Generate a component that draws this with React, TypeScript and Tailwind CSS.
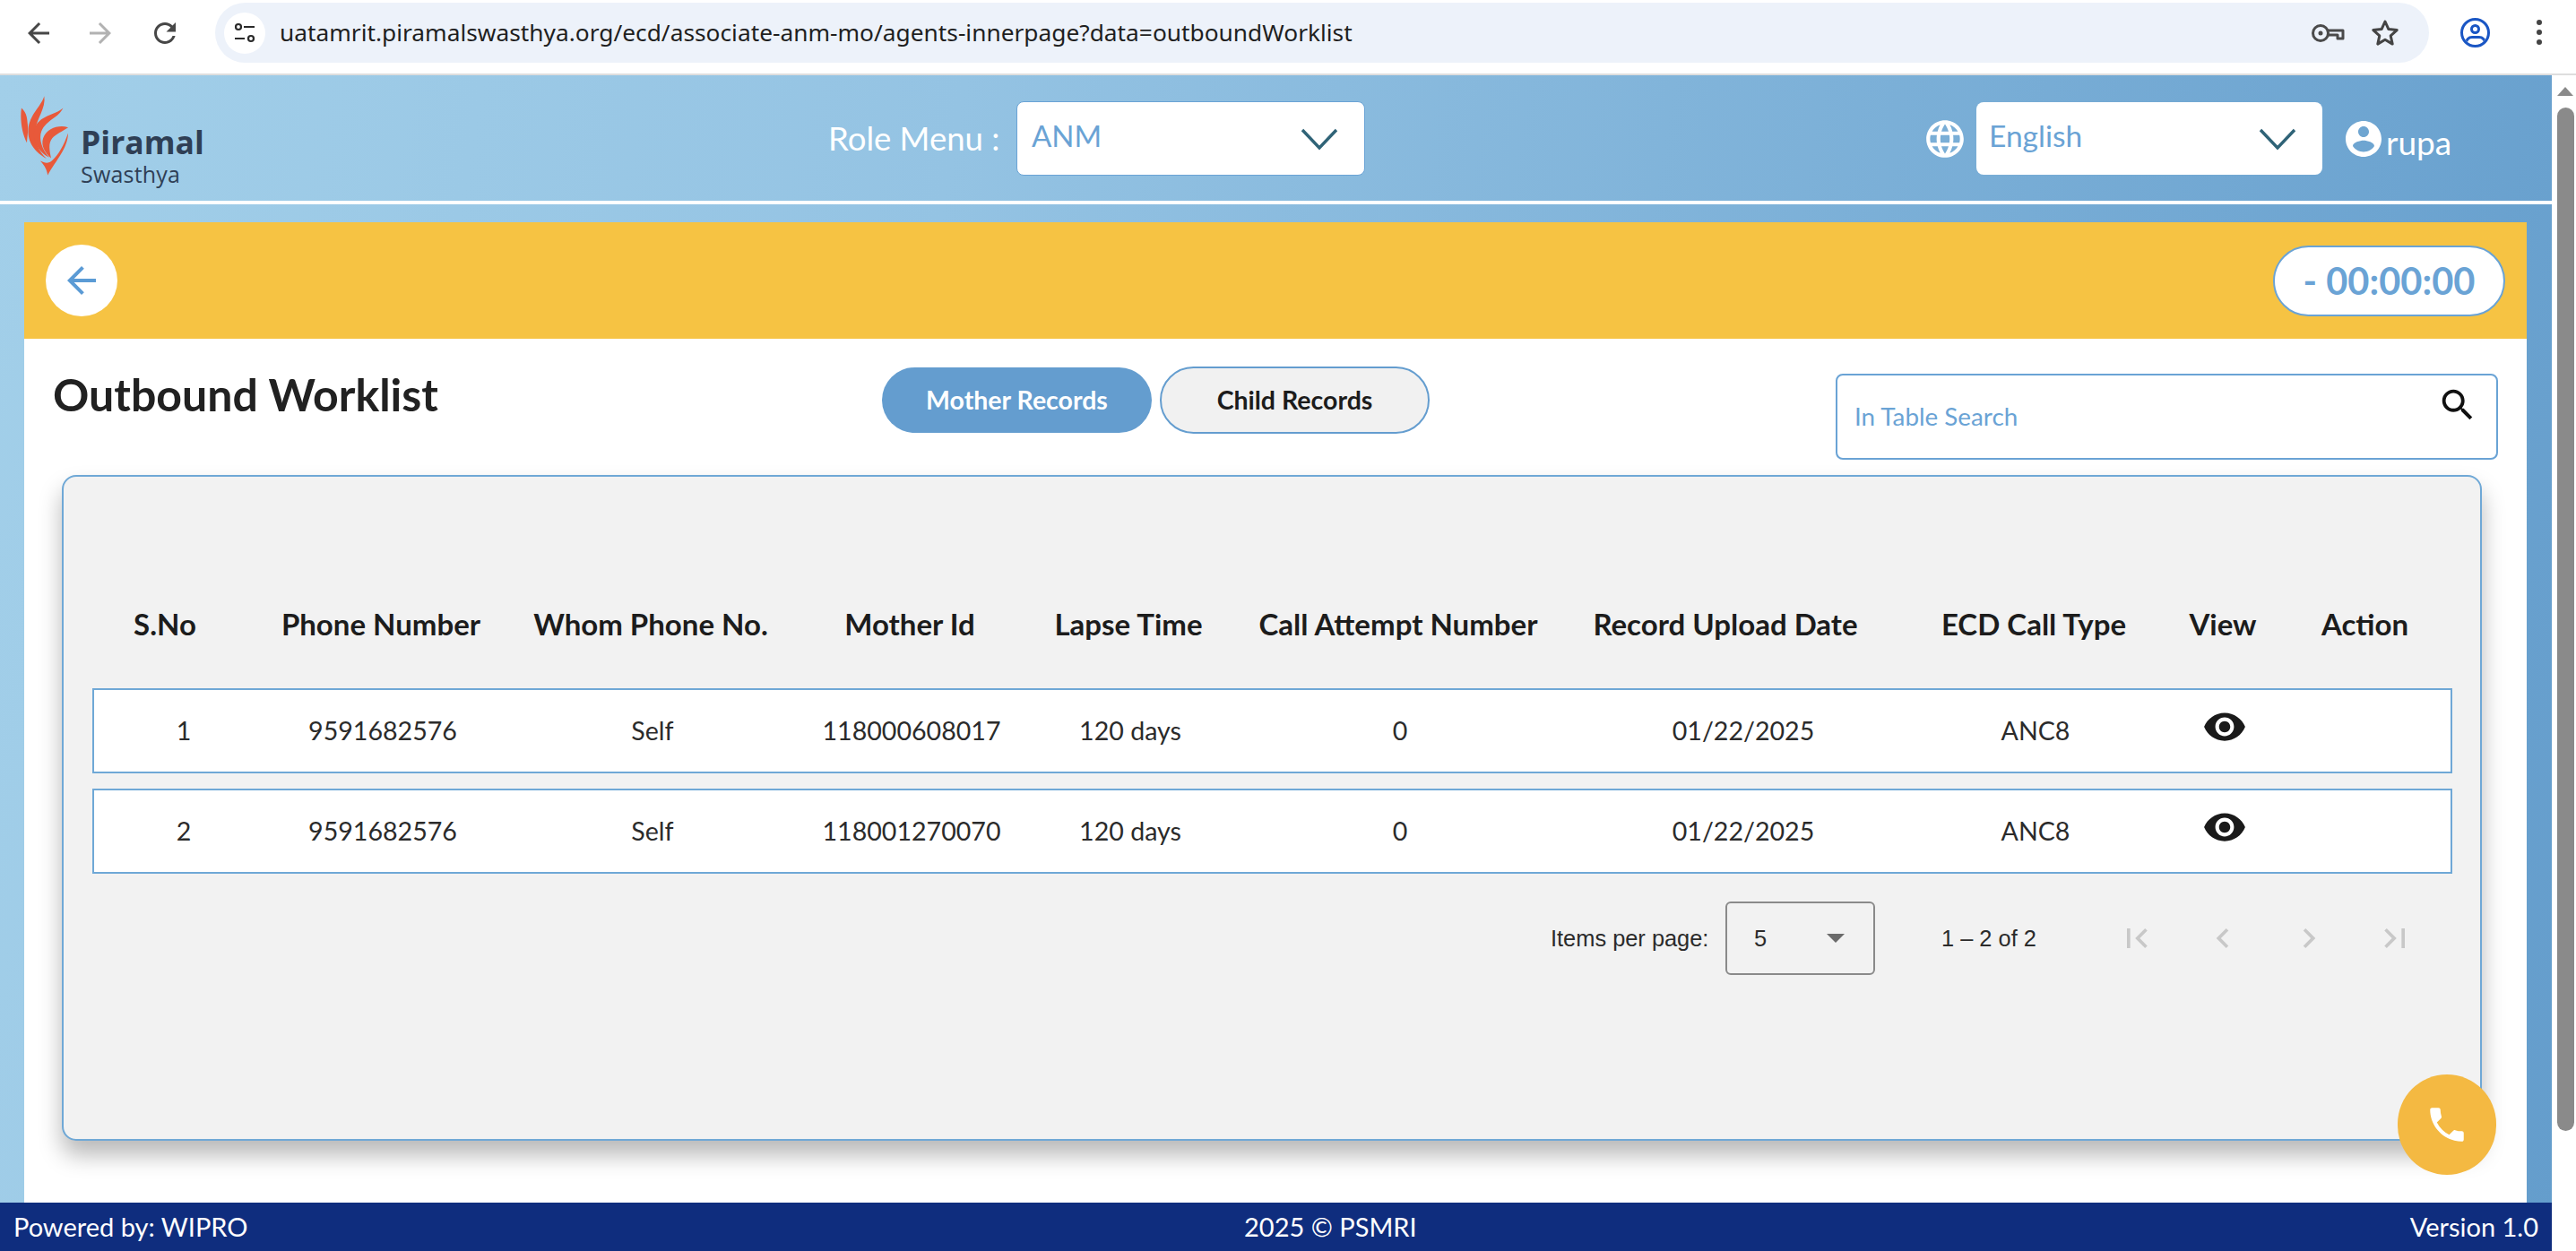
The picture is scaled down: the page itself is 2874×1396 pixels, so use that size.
import React from "react";

const P = {
  back: "M20 11H7.83l5.59-5.59L12 4l-8 8 8 8 1.41-1.41L7.83 13H20v-2z",
  search:
    "M15.5 14h-.79l-.28-.27C15.41 12.59 16 11.11 16 9.5 16 5.91 13.09 3 9.5 3S3 5.91 3 9.5 5.91 16 9.5 16c1.61 0 3.09-.59 4.23-1.57l.27.28v.79l5 4.99L20.49 19l-4.99-5zm-6 0C7.01 14 5 11.99 5 9.5S7.01 5 9.5 5 14 7.01 14 9.5 11.99 14 9.5 14z",
  eye: "M12 4.5C7 4.5 2.73 7.61 1 12c1.73 4.39 6 7.5 11 7.5s9.27-3.11 11-7.5c-1.73-4.39-6-7.5-11-7.5zM12 17c-2.76 0-5-2.24-5-5s2.24-5 5-5 5 2.24 5 5-2.24 5-5 5zm0-8c-1.66 0-3 1.34-3 3s1.34 3 3 3 3-1.34 3-3-1.34-3-3-3z",
  phone:
    "M6.62 10.79c1.44 2.83 3.76 5.14 6.59 6.59l2.2-2.2c.27-.27.67-.36 1.02-.24 1.12.37 2.33.57 3.57.57.55 0 1 .45 1 1V20c0 .55-.45 1-1 1-9.39 0-17-7.61-17-17 0-.55.45-1 1-1h3.5c.55 0 1 .45 1 1 0 1.25.2 2.45.57 3.57.11.35.03.74-.25 1.02l-2.2 2.2z",
  account:
    "M12 2C6.48 2 2 6.48 2 12s4.48 10 10 10 10-4.48 10-10S17.52 2 12 2zm0 3c1.66 0 3 1.34 3 3s-1.34 3-3 3-3-1.34-3-3 1.34-3 3-3zm0 14.2c-2.5 0-4.71-1.28-6-3.22.03-1.99 4-3.08 6-3.08 1.99 0 5.97 1.09 6 3.08-1.29 1.94-3.5 3.22-6 3.22z",
  globe:
    "M11.99 2C6.47 2 2 6.48 2 12s4.47 10 9.99 10C17.52 22 22 17.52 22 12S17.52 2 11.99 2zm6.93 6h-2.95c-.32-1.25-.78-2.45-1.38-3.56 1.84.63 3.37 1.91 4.33 3.56zM12 4.04c.83 1.2 1.48 2.53 1.91 3.96h-3.82c.43-1.43 1.08-2.76 1.91-3.96zM4.26 14C4.1 13.36 4 12.69 4 12s.1-1.36.26-2h3.38c-.08.66-.14 1.32-.14 2 0 .68.06 1.34.14 2H4.26zm.82 2h2.95c.32 1.25.78 2.45 1.38 3.56-1.84-.63-3.37-1.9-4.33-3.56zm2.95-8H5.08c.96-1.66 2.49-2.93 4.33-3.56C8.81 5.55 8.35 6.75 8.03 8zM12 19.96c-.83-1.2-1.48-2.53-1.91-3.96h3.82c-.43 1.43-1.08 2.76-1.91 3.96zM14.34 14H9.66c-.09-.66-.16-1.32-.16-2 0-.68.07-1.35.16-2h4.68c.09.65.16 1.32.16 2 0 .68-.07 1.34-.16 2zm.25 5.56c.6-1.11 1.06-2.31 1.38-3.56h2.95c-.96 1.65-2.49 2.93-4.33 3.56zM16.36 14c.08-.66.14-1.32.14-2 0-.68-.06-1.34-.14-2h3.38c.16.64.26 1.31.26 2s-.1 1.36-.26 2h-3.38z",
  first: "M18.41 16.59L13.82 12l4.59-4.59L17 6l-6 6 6 6zM6 6h2v12H6z",
  prev: "M15.41 7.41L14 6l-6 6 6 6 1.41-1.41L10.83 12z",
  next: "M10 6L8.59 7.41 13.17 12l-4.58 4.59L10 18l6-6z",
  last: "M5.59 7.41L10.18 12l-4.59 4.59L7 18l6-6-6-6zM16 6h2v12h-2z",
  reload:
    "M17.65 6.35C16.2 4.9 14.21 4 12 4c-4.42 0-7.99 3.58-7.99 8s3.57 8 7.99 8c3.73 0 6.84-2.55 7.73-6h-2.08c-.82 2.33-3.04 4-5.65 4-3.31 0-6-2.69-6-6s2.69-6 6-6c1.66 0 3.14.69 4.22 1.78L13 11h7V4l-2.35 2.35z",
};

function Icon({ d, className }: { d: string; className: string }) {
  return (
    <svg viewBox="0 0 24 24" fill="currentColor" className={className}>
      <path d={d} />
    </svg>
  );
}

function Chevron() {
  return (
    <svg viewBox="0 0 42 26" fill="none" className="w-[42px] h-[26px]">
      <path d="M2 3 L21 23 L40 3" stroke="#2f6377" strokeWidth="3.4" />
    </svg>
  );
}

function Logo() {
  return (
    <div className="flex items-start ml-[23px] mt-[21px]">
      <svg viewBox="65 45 170 285" className="w-[54px] h-[93px] shrink-0" fill="#e8593a">
        <path d="M148 48 C154 92 122 124 116 170 C112 208 128 240 156 268 C118 248 88 212 92 165 C96 113 136 86 148 48 Z" />
        <path d="M68 90 C88 108 88 130 90 150 C92 175 88 192 87 212 C70 180 62 130 68 90 Z" />
        <path d="M214 90 C198 126 156 130 138 172 C128 198 140 238 166 264 C128 244 104 205 114 163 C128 116 186 116 214 90 Z" />
        <path d="M232 158 C200 148 158 160 144 196 C136 222 150 248 172 266 C166 236 162 214 176 196 C190 180 212 172 232 158 Z" />
        <path d="M232 178 C230 232 192 270 160 326 C157 306 150 294 134 276 C150 284 164 286 176 274 C200 252 216 222 232 178 Z" />
      </svg>
      <div className="ml-[13px] mt-[32px] flex flex-col text-[#2f3f55] font-['Open_Sans',sans-serif]">
        <span className="text-[35.5px] leading-[43px] font-bold">Piramal</span>
        <span className="text-[25px] leading-[28px] tracking-[0.2px]">Swasthya</span>
      </div>
    </div>
  );
}

function BrowserBar() {
  return (
    <div className="h-[84px] bg-white border-b-2 border-[#dedede] flex items-start shrink-0 relative font-['Noto_Sans',sans-serif]">
      <div className="w-[240px] h-[74px] flex items-center pl-[25px] gap-[33px] shrink-0">
        <Icon d={P.back} className="w-[36px] h-[36px] text-[#474747]" />
        <Icon d={P.back} className="w-[36px] h-[36px] text-[#b2b2b2] -scale-x-100" />
        <Icon d={P.reload} className="w-[36px] h-[36px] text-[#474747] ml-[3px]" />
      </div>
      <div className="mt-[3px] w-[2470px] h-[67px] rounded-full bg-[#edf2fa] flex items-center pl-[10px] pr-[33px]">
        <div className="w-[46px] h-[46px] rounded-full bg-white flex items-center justify-center shrink-0">
          <svg viewBox="0 0 26 26" className="w-[26px] h-[26px]" fill="none" stroke="#2a2a2a" strokeWidth="2.2">
            <circle cx="6" cy="6" r="3" />
            <path d="M12 6H24M2 19H13" />
            <circle cx="20" cy="19" r="3" />
          </svg>
        </div>
        <span className="ml-[16px] text-[26.3px] leading-none text-[#1f1f1f] whitespace-nowrap">
          uatamrit.piramalswasthya.org/ecd/associate-anm-mo/agents-innerpage?data=outboundWorklist
        </span>
        <div className="ml-auto flex items-center gap-[29px]">
          <svg viewBox="0 0 38 22" className="w-[38px] h-[22px]" fill="none" stroke="#4a4a4a" strokeWidth="3">
            <circle cx="11" cy="11" r="8.5" />
            <circle cx="11" cy="11" r="2.5" fill="#4a4a4a" stroke="none" />
            <path d="M19 8H36V17H30V13H19" strokeLinejoin="round" />
          </svg>
          <svg viewBox="0 0 32 32" className="w-[32px] h-[32px]" fill="none" stroke="#444" strokeWidth="3" strokeLinejoin="round">
            <path d="M16 3l3.9 8.6 9.3 1-7 6.3 2 9.2L16 23.3 7.800 28.100l2-9.200-7-6.300 9.300-1z" />
          </svg>
        </div>
      </div>
      <div className="mt-[20px] ml-[35px] w-[33px] h-[33px] rounded-full border-[3px] border-[#1a56c4] relative overflow-hidden shrink-0">
        <div className="w-[11px] h-[11px] rounded-full border-[3px] border-[#1a56c4] mx-auto mt-[4px]" />
        <div className="w-[24px] h-[16px] rounded-full border-[3px] border-[#1a56c4] mx-auto mt-[2px]" />
      </div>
      <div className="mt-[22px] ml-[52px] flex flex-col gap-[5px] shrink-0">
        <span className="w-[6px] h-[6px] rounded-full bg-[#444]" />
        <span className="w-[6px] h-[6px] rounded-full bg-[#444]" />
        <span className="w-[6px] h-[6px] rounded-full bg-[#444]" />
      </div>
    </div>
  );
}

function Header() {
  return (
    <div className="h-[140px] flex items-start shrink-0 font-['Lato',sans-serif]">
      <div className="w-[924px] shrink-0">
        <Logo />
      </div>
      <span className="text-white text-[36.5px] leading-[40px] mt-[50px] w-[210px] shrink-0 whitespace-nowrap">Role Menu :</span>
      <div className="mt-[29px] w-[389px] h-[83px] bg-white rounded-[8px] border border-[#6aa3d5] flex items-center pl-[16px] pr-[29px] shrink-0">
        <span className="text-[33px] leading-none text-[#6aa3d5] -mt-[6px]">ANM</span>
        <span className="ml-auto">
          <Chevron />
        </span>
      </div>
      <Icon d={P.globe} className="w-[50px] h-[50px] text-white mt-[46px] ml-[622px] shrink-0" />
      <div className="mt-[30px] ml-[10px] w-[386px] h-[81px] bg-white rounded-[8px] flex items-center pl-[14px] pr-[29px] shrink-0">
        <span className="text-[33.5px] leading-none text-[#6aa3d5] -mt-[6px]">English</span>
        <span className="ml-auto">
          <Chevron />
        </span>
      </div>
      <div className="ml-[22px] mt-[47px] flex items-center shrink-0">
        <Icon d={P.account} className="w-[48px] h-[48px] text-white" />
        <span className="text-white text-[37px] leading-none ml-[1px] mt-[6px]">rupa</span>
      </div>
    </div>
  );
}

const cols = "grid grid-cols-[200px_244px_358px_220px_268px_334px_432px_220px_202px_155px] items-center text-center";

const heads: [string, string][] = [
  ["S.No", "pr-[38px]"],
  ["Phone Number", ""],
  ["Whom Phone No.", ""],
  ["Mother Id", ""],
  ["Lapse Time", ""],
  ["Call Attempt Number", ""],
  ["Record Upload Date", "pr-[36px]"],
  ["ECD Call Type", ""],
  ["View", ""],
  ["Action", "pr-[40px]"],
];

const rows = [
  ["1", "9591682576", "Self", "118000608017", "120 days", "0", "01/22/2025", "ANC8"],
  ["2", "9591682576", "Self", "118001270070", "120 days", "0", "01/22/2025", "ANC8"],
];

function Table() {
  return (
    <div className="ml-[32px] w-[2633px] font-['Lato',sans-serif]">
      <div className={`${cols} h-[70px] mt-[130px] mb-[36px]`}>
        {heads.map(([h, c]) => (
          <div key={h} className={`text-[33px] font-bold text-[#1c1c1c] whitespace-nowrap ${c}`}>
            {h}
          </div>
        ))}
      </div>
      <div className="flex flex-col gap-[17px]">
        {rows.map((r) => (
          <div key={r[0]} className={`${cols} h-[95px] bg-white border-2 border-[#6fa8d6]`}>
            {r.map((v, i) => (
              <div key={i} className="text-[28.6px] text-[#2b2b2b] whitespace-nowrap">
                {v}
              </div>
            ))}
            <div className="flex justify-center">
              <Icon d={P.eye} className="w-[50px] h-[50px] text-[#1a1a1a] -mt-[10px]" />
            </div>
            <div />
          </div>
        ))}
      </div>
      <div className="mt-[31px] flex items-center text-[25.4px] text-[#2b2b2b] font-['Liberation_Sans',sans-serif]">
        <span className="ml-[1627px] w-[176px] whitespace-nowrap">Items per page:</span>
        <div className="ml-[19px] w-[167px] h-[82px] border-2 border-[#8a8a8a] rounded-[6px] flex items-center pl-[30px] pr-[32px] shrink-0">
          <span>5</span>
          <span className="ml-auto w-0 h-0 border-l-[10px] border-r-[10px] border-t-[10px] border-l-transparent border-r-transparent border-t-[#6b6b6b]" />
        </div>
        <span className="ml-[74px] w-[105px] whitespace-nowrap">1 – 2 of 2</span>
        <div className="ml-[91px] flex gap-[52px] text-[#c8c8c8]">
          <Icon d={P.first} className="w-[44px] h-[44px]" />
          <Icon d={P.prev} className="w-[44px] h-[44px]" />
          <Icon d={P.next} className="w-[44px] h-[44px]" />
          <Icon d={P.last} className="w-[44px] h-[44px]" />
        </div>
      </div>
    </div>
  );
}

export default function App() {
  return (
    <div className="w-[2874px] h-[1396px] overflow-hidden flex flex-col bg-white">
      <BrowserBar />
      <div className="flex flex-1 min-h-0">
        <div className="w-[2847px] shrink-0 flex flex-col bg-[linear-gradient(100deg,#a2cfe9_0%,#94c3e3_35%,#649dcc_100%)]">
          <Header />
          <div className="h-[4px] bg-white shrink-0" />
          <div className="flex-1 min-h-0 flex flex-col pt-[20px] pl-[27px] pr-[28px]">
            <div className="h-[130px] bg-[#f6c343] flex items-center justify-between shrink-0 pl-[24px] pr-[24px]">
              <div className="w-[80px] h-[80px] rounded-full bg-white flex items-center justify-center">
                <Icon d={P.back} className="w-[48px] h-[48px] text-[#5b9bd5]" />
              </div>
              <div className="w-[259px] h-[79px] rounded-full bg-white border-2 border-[#6aa3d5] flex items-center justify-center text-[#6aa3d5] text-[41.6px] font-bold font-['Lato',sans-serif]">
                - 00:00:00
              </div>
            </div>
            <div className="flex-1 min-h-0 bg-white relative pt-[31px] font-['Lato',sans-serif]">
              <div className="h-[121px] flex items-start">
                <div className="w-[957px] pl-[32px] shrink-0 text-[50px] leading-[60px] font-bold text-[#212121] whitespace-nowrap mt-[1px]">
                  Outbound Worklist
                </div>
                <div className="flex items-start gap-[9px]">
                  <div className="w-[301px] h-[73px] mt-[1px] rounded-full bg-[#649dcf] text-white text-[28.5px] font-bold flex items-center justify-center">
                    Mother Records
                  </div>
                  <div className="w-[301px] h-[75px] rounded-full bg-[#f1f1f1] border-2 border-[#649dcf] text-[#1c1c1c] text-[28.5px] font-bold flex items-center justify-center">
                    Child Records
                  </div>
                </div>
                <div className="ml-auto mr-[32px] mt-[8px] w-[739px] h-[96px] rounded-[8px] border-2 border-[#6aa3d5] flex items-start pl-[19px] pr-[20px]">
                  <span className="text-[27.8px] leading-none text-[#6aa3d5] mt-[32px]">In Table Search</span>
                  <Icon d={P.search} className="ml-auto w-[46px] h-[46px] text-[#111] mt-[10px]" />
                </div>
              </div>
              <div className="ml-[42px] w-[2700px] h-[743px] rounded-[16px] border-2 border-[#6fa8d6] bg-[#f2f2f2] flex shadow-[0_16px_26px_rgba(0,0,0,0.28)]">
                <Table />
              </div>
              <div className="absolute right-[34px] bottom-[31px] w-[110px] h-[112px] rounded-full bg-[#f4b942] flex items-center justify-center">
                <Icon d={P.phone} className="w-[50px] h-[50px] text-white" />
              </div>
            </div>
          </div>
          <div className="h-[54px] bg-[#0f2d7e] shrink-0 flex items-center justify-between px-[15px] text-white text-[29px] font-['Lato',sans-serif] relative">
            <span>Powered by: WIPRO</span>
            <span className="absolute left-[1388px]">2025 © PSMRI</span>
            <span>Version 1.0</span>
          </div>
        </div>
        <div className="w-[27px] shrink-0 bg-white flex flex-col items-center pl-[3px]">
          <span className="mt-[13px] w-0 h-0 border-l-[9px] border-r-[9px] border-b-[10px] border-l-transparent border-r-transparent border-b-[#8a8a8a]" />
          <span className="mt-[13px] w-[19px] h-[1142px] rounded-full bg-[#8a8a8a]" />
        </div>
      </div>
    </div>
  );
}
